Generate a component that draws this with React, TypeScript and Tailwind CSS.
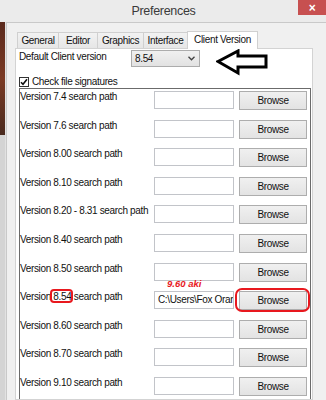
import React from "react";

const rows = [
  "Version 7.4 search path",
  "Version 7.6 search path",
  "Version 8.00 search path",
  "Version 8.10 search path",
  "Version 8.20 - 8.31 search path",
  "Version 8.40 search path",
  "Version 8.50 search path",
  "Version 8.54 search path",
  "Version 8.60 search path",
  "Version 8.70 search path",
  "Version 9.10 search path",
];

const tabs = [
  { name: "General", w: "w-[42px]" },
  { name: "Editor", w: "w-[40px]" },
  { name: "Graphics", w: "w-[47px]" },
  { name: "Interface", w: "w-[45px]" },
];

function ArrowMark() {
  return (
    <svg width="52" height="27" viewBox="0 0 52 27" className="shrink-0">
      <path
        d="M2 12.5 L22 2 L22 7 L50 7 L50 18 L22 18 L22 24 Z"
        fill="white"
        stroke="black"
        strokeWidth="3"
        strokeLinejoin="miter"
      />
    </svg>
  );
}

function PathRow({ label, index }: { label: string; index: number }) {
  const marked = index === 7;
  return (
    <div className="h-[28.6px] flex items-start shrink-0">
      <div className="w-[134px] leading-[16px] whitespace-nowrap">
        {marked ? (
          <>
            Version{" "}
            <span className="relative">
              8.54
              <span className="absolute -left-[3px] -right-[2px] -top-[2px] -bottom-[1px] border-[2.5px] border-[#e8181e] rounded-[4px]" />
            </span>{" "}
            search path
          </>
        ) : (
          label
        )}
      </div>
      <div className="relative mt-[2px]">
        {marked && (
          <span className="absolute -top-[12px] left-[13px] text-[9.5px] leading-[10px] font-bold italic text-[#e8181e] tracking-normal whitespace-nowrap">
            9.60 aki
          </span>
        )}
        <div className="w-[80px] h-[18px] bg-white border border-[#c2c4c9] overflow-hidden">
          {marked && (
            <div className="pl-[3px] leading-[16px] whitespace-nowrap">
              C:\Users\Fox Orange\Desktop
            </div>
          )}
        </div>
      </div>
      <div className="relative ml-[5px] mt-[2px]">
        <div className="w-[68px] h-[19px] bg-gradient-to-b from-[#f0f0f0] to-[#e3e3e3] border border-[#adadad] flex items-center justify-center">
          Browse
        </div>
        {marked && (
          <span className="absolute -left-[4px] -right-[3px] -top-[3px] -bottom-[2px] border-[2.5px] border-[#e8181e] rounded-[7px]" />
        )}
      </div>
    </div>
  );
}

export default function App() {
  return (
    <div
      className="w-[326px] h-[400px] overflow-hidden bg-[#ebebeb] flex flex-col text-[10px] text-[#111] tracking-[-0.35px]"
      style={{ fontFamily: '"Liberation Sans", Arial, sans-serif' }}
    >
      <div className="h-[22px] shrink-0 grid grid-cols-[1fr_auto_1fr]">
        <div />
        <div className="text-[12.5px] leading-[22px] text-[#3a3a3a] tracking-[-0.3px] pl-[1px]">
          Preferences
        </div>
        <div className="flex justify-end items-start">
          <div className="w-[28px] h-[15px] bg-[#c75050] flex items-center justify-center text-white text-[12px] leading-none font-bold">
            ×
          </div>
        </div>
      </div>

      <div className="flex-1 flex min-h-0">
        <div className="w-[5px] shrink-0 flex flex-col">
          <div className="h-[113px] bg-gradient-to-b from-[#5b2a1d] via-[#7b3a24] to-[#4a2a1e]" />
          <div className="flex-1 bg-[#d4d4d4]" />
        </div>
        <div className="w-[1px] shrink-0 bg-[#e2e2e2]" />
        <div className="flex-1 bg-[#f0f0f0] border-l border-t border-[#c9c9c9] pl-[8px] pt-[8px] flex flex-col min-h-0">
          <div className="flex items-end h-[17px] pl-[2px] shrink-0">
            {tabs.map((t, i) => (
              <div
                key={t.name}
                className={`${t.w} h-[16px] ${i > 0 ? "-ml-px" : ""} border border-b-0 border-[#d0d0d0] bg-gradient-to-b from-[#f2f2f2] to-[#e6e6e6] flex items-center justify-center leading-[15px]`}
              >
                {t.name}
              </div>
            ))}
            <div className="relative z-10 -ml-px -mb-px w-[71px] h-[18px] border border-b-0 border-[#d0d0d0] bg-white flex items-center justify-center leading-[16px] pb-[2px]">
              Client Version
            </div>
          </div>

          <div className="w-[298px] flex-1 bg-white border border-[#d3d3d3] flex flex-col min-h-0">
            <div className="h-[27px] shrink-0 flex items-start pl-[3px]">
              <div className="w-[112px] leading-[16px] whitespace-nowrap">
                Default Client version
              </div>
              <div className="w-[69px] h-[17px] mt-[1px] bg-gradient-to-b from-[#f0f0f0] to-[#e2e2e2] border border-[#acacac] flex items-center pl-[3px] pr-[4px]">
                <span className="flex-1">8.54</span>
                <svg width="7" height="5" viewBox="0 0 7 5">
                  <path d="M0.5 0.8 L3.5 3.8 L6.5 0.8" fill="none" stroke="#404040" strokeWidth="1.3" />
                </svg>
              </div>
              <div className="ml-[16px]">
                <ArrowMark />
              </div>
            </div>

            <div className="h-[12px] shrink-0 flex items-center pl-[3px] gap-[3px]">
              <div className="w-[10px] h-[10px] border border-[#333] bg-white flex items-center justify-center">
                <svg width="8" height="8" viewBox="0 0 8 8">
                  <path d="M1 4.2 L3 6.3 L7 1.2" fill="none" stroke="#111" strokeWidth="1.6" />
                </svg>
              </div>
              <span className="leading-[12px]">Check file signatures</span>
            </div>

            <div className="ml-[3px] mr-[1px] flex-1 bg-white border-l border-t border-r border-[#6b6b6b] flex flex-col min-h-0">
              {rows.map((r, i) => (
                <PathRow key={r} label={r} index={i} />
              ))}
            </div>
          </div>
        </div>
      </div>
    </div>
  );
}
